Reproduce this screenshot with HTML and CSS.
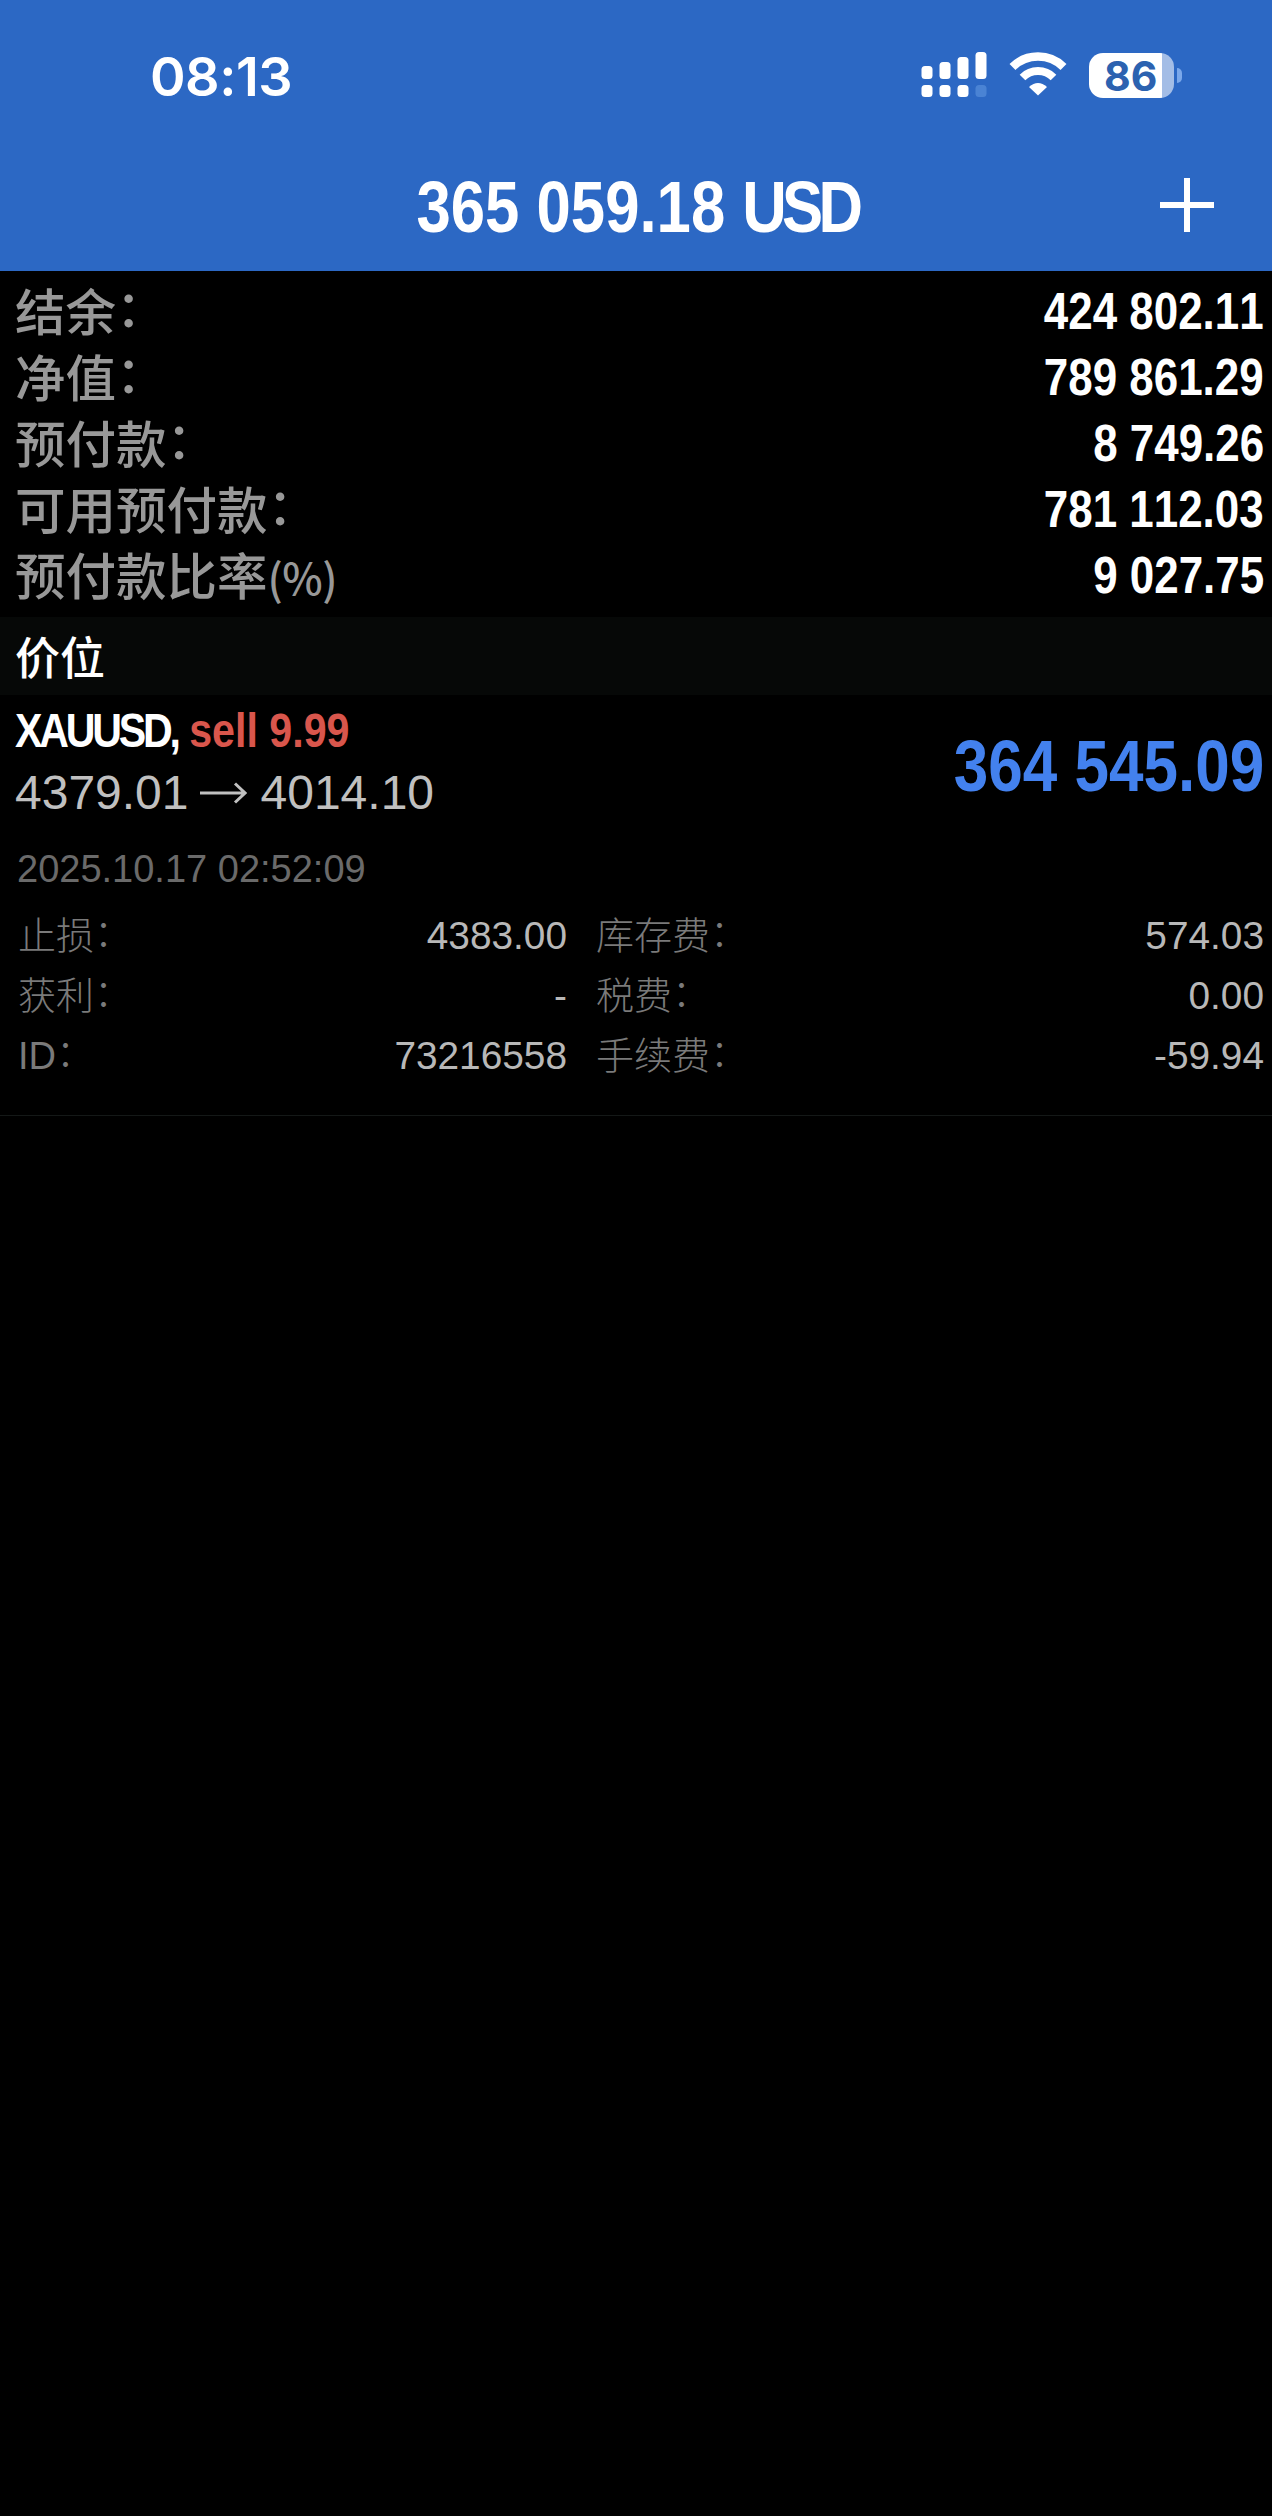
FILE: index.html
```
<!DOCTYPE html>
<html lang="zh-CN">
  <head>
    <meta charset="UTF-8" />
    <title>Trade</title>
    <link rel="stylesheet" href="styles.css">
  </head>
  <body>
    <div class="header">
      <div class="status-bar">
        <div class="time">08:13</div>
        <div class="status-icons">
          <svg class="signal" width="66" height="46" viewBox="0 0 66 46" fill="#fff">
            <rect x="0.500" y="14" width="11" height="13" rx="3.5" />
            <rect x="18.500" y="10" width="11" height="17" rx="3.5" />
            <rect x="36.500" y="5" width="11" height="22" rx="3.5" />
            <rect x="54.500" y="0" width="11" height="27" rx="3.5" />
            <rect x="0.500" y="33" width="11" height="12" rx="3.5" />
            <rect x="18.500" y="33" width="11" height="12" rx="3.5" />
            <rect x="36.500" y="33" width="11" height="12" rx="3.5" />
            <rect x="54.500" y="33" width="11" height="12" rx="3.5" fill="#4a83d4" />
          </svg>
          <svg class="wifi" width="60" height="46" viewBox="0 0 60 46">
            <path d="M4.500 15 A36.500 36.500 0 0 1 55.500 15" fill="none" stroke="#fff" stroke-width="8.500" />
            <path d="M14.500 25.500 A22 22 0 0 1 45.500 25.500" fill="none" stroke="#fff" stroke-width="8" />
            <path d="M30 43.500 L21 35 Q30 27 39 35 Z" fill="#fff" />
          </svg>
          <div class="battery">
            <div class="battery-body"><span>86</span></div>
            <div class="battery-tip"></div>
          </div>
        </div>
      </div>
      <div class="title-bar">
        <div class="title"><span class="condensed">365 059.18 <span class="caps">USD</span></span></div>
        <svg class="add" width="54" height="54" viewBox="0 0 54 54">
          <path d="M27 0 V54 M0 27 H54" stroke="#fff" stroke-width="6" />
        </svg>
      </div>
    </div>

    <div class="summary">
      <div class="row">
        <span class="label">结余<span class="colon">：</span></span><span class="value condensed">424 802.11</span>
      </div>
      <div class="row">
        <span class="label">净值<span class="colon">：</span></span><span class="value condensed">789 861.29</span>
      </div>
      <div class="row">
        <span class="label">预付款<span class="colon">：</span></span><span class="value condensed">8 749.26</span>
      </div>
      <div class="row">
        <span class="label">可用预付款<span class="colon">：</span></span><span class="value condensed">781 112.03</span>
      </div>
      <div class="row">
        <span class="label">预付款比率<span class="percent">(%)</span></span><span class="value condensed">9 027.75</span>
      </div>
    </div>

    <div class="section-header">价位</div>

    <div class="position">
      <div class="position-top">
        <div>
          <div class="symbol condensed"><span class="caps">XAUUSD,</span> <span class="sell">sell 9.99</span></div>
          <div class="prices">
            <span>4379.01</span>
            <svg width="47" height="22" viewBox="0 0 47 22" fill="none" stroke="#c0c0c0" stroke-width="3">
              <path d="M0 11 H45 M35 1.500 L45 11 L35 20.500" />
            </svg>
            <span>4014.10</span>
          </div>
        </div>
        <div class="profit condensed">364 545.09</div>
      </div>
      <div class="date">2025.10.17 02:52:09</div>
      <div class="details">
        <div class="column">
          <div class="detail"><span>止损<span class="colon">：</span></span><b>4383.00</b></div>
          <div class="detail"><span>获利<span class="colon">：</span></span><b>-</b></div>
          <div class="detail"><span>ID<span class="colon">：</span></span><b>73216558</b></div>
        </div>
        <div class="column">
          <div class="detail"><span>库存费<span class="colon">：</span></span><b>574.03</b></div>
          <div class="detail"><span>税费<span class="colon">：</span></span><b>0.00</b></div>
          <div class="detail"><span>手续费<span class="colon">：</span></span><b>-59.94</b></div>
        </div>
      </div>
    </div>
  </body>
</html>
```
FILE: styles.css
```
body {
  font-family: "Liberation Sans", "Noto Sans CJK SC", sans-serif;
  margin: 0;
  padding: 0;
  min-height: 2516px;
  background-color: #000;
  color: white;
  font-kerning: none;
}
.header {
  height: 271px;
  background-color: #2c68c4;
}
.status-bar {
  display: flex;
  justify-content: space-between;
  align-items: center;
  height: 150px;
  padding: 0 90px 0 150px;
}
.time {
  padding-top: 2px;
  font-family: Inter, sans-serif;
  font-size: 54px;
  font-weight: 600;
  letter-spacing: -0.5px;
}
.status-icons {
  display: flex;
  align-items: center;
}
.wifi {
  margin: 0 21px 0 21px;
}
.battery {
  display: flex;
  align-items: center;
  gap: 3px;
}
.battery-body {
  width: 85px;
  height: 45px;
  border-radius: 14px;
  background: linear-gradient(to right, #fff 73px, #a3bde6 73px);
  color: #2c62b0;
  font-family: Inter, sans-serif;
  font-size: 41px;
  font-weight: 700;
  line-height: 46px;
}
.battery-body span {
  margin-left: 15px;
}
.battery-tip {
  width: 5px;
  height: 15px;
  border-radius: 0 6px 6px 0;
  background-color: #7ba8ea;
}
.title-bar {
  display: flex;
  align-items: center;
  height: 109px;
  padding: 0 58px 0 114px;
}
.title {
  flex: 1;
  padding-top: 3px;
  text-align: center;
  font-size: 73px;
}
/* Condensed bold figures */
.condensed {
  display: inline-block;
  font-weight: bold;
  white-space: nowrap;
  transform: scaleX(0.85);
}
.caps {
  letter-spacing: -0.078em;
}
.title .condensed {
  transform: scaleX(0.845);
}
.summary {
  padding: 6px 8px 10px 15px;
  color: #989898;
}
.row {
  display: flex;
  justify-content: space-between;
  align-items: center;
  height: 66px;
  font-size: 51px;
  font-weight: 500;
  line-height: 64px;
}
.label {
  padding-top: 7px;
  font-size: 50.5px;
  line-height: 59px;
}
.colon {
  line-height: 0;
  vertical-align: 0.07em;
}
.percent {
  font-family: "Noto Sans CJK SC", sans-serif;
  font-size: 43px;
  letter-spacing: -0.5px;
  line-height: 0;
}
.value {
  padding-top: 2px;
  font-size: 51.7px;
  color: white;
  transform-origin: right;
}
.section-header {
  height: 78px;
  padding-left: 15px;
  background-color: #060807;
  font-family: "Noto Sans CJK SC", sans-serif;
  font-size: 45px;
  font-weight: 500;
  line-height: 78px;
}
.position {
  height: 420px;
  border-bottom: 1px solid #141817;
}
.position-top {
  display: flex;
  justify-content: space-between;
  align-items: center;
  padding: 5px 8px 0 15px;
}
.symbol {
  font-size: 49px;
  line-height: 61px;
  transform: scaleX(0.84);
  transform-origin: left;
}
.sell {
  color: #d9564c;
}
.prices {
  display: flex;
  align-items: center;
  gap: 14px;
  font-size: 48px;
  line-height: 63px;
  color: #c0c0c0;
}
.prices svg {
  margin-left: -3px;
}
.profit {
  padding-top: 6px;
  font-size: 73px;
  color: #4381ee;
  transform-origin: right;
}
.date {
  margin-top: 23px;
  padding-left: 17px;
  font-size: 38px;
  line-height: 44px;
  color: #6a6a6a;
}
.details {
  display: flex;
  gap: 29px;
  margin-top: 15px;
  padding: 0 8px 0 18px;
}
.column {
  width: 549px;
}
.column + .column {
  flex: 1;
}
.detail {
  display: flex;
  justify-content: space-between;
  height: 60px;
  font-size: 38px;
  line-height: 60px;
  color: #7a7a7a;
}
.detail span {
  font-weight: 300;
}
.detail b {
  font-size: 38.8px;
  font-weight: normal;
  color: #b8b8b8;
}
```
